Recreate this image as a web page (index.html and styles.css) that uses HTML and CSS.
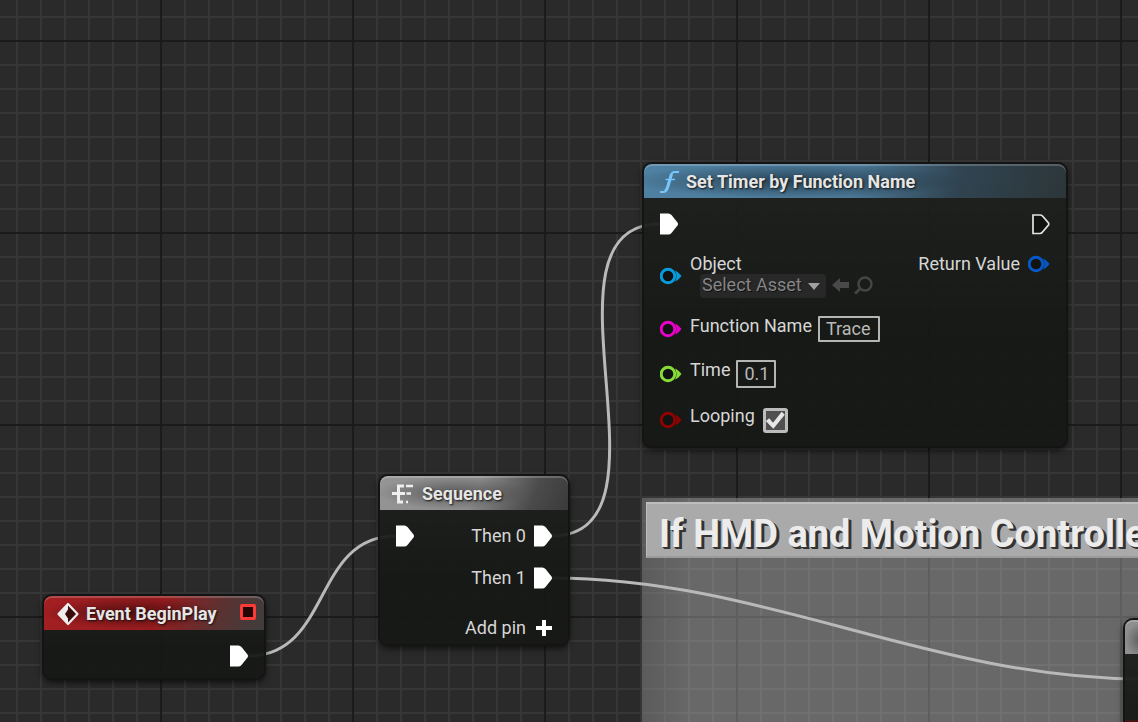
FILE: index.html
```html
<!DOCTYPE html>
<html lang="en">
<head>
<meta charset="utf-8">
<title>Event Graph</title>
<link rel="stylesheet" href="styles.css">
</head>
<body>
<svg class="defs" aria-hidden="true">
  <symbol id="exec" viewBox="0 0 18 22"><path d="M0 .5H8.500Q10 .5 11.500 2L17.500 9.500Q18.500 11 17.500 12.500L11.500 20Q10 21.500 8.500 21.500H0Z" fill="#fff"/></symbol>
  <symbol id="exec-open" viewBox="0 0 18 22"><path d="M1 2H8Q9.500 2 10.500 3L16.500 10Q17 11 16.500 12L10.500 19Q9.500 20.500 8 20.500H1Z" fill="#101210" stroke="#e4e4e4" stroke-width="1.700"/></symbol>
  <symbol id="pin" viewBox="0 0 22 18"><circle cx="8" cy="9" r="6.800" fill="#101312" stroke="currentColor" stroke-width="3"/><path d="M15 3.500Q18 4.500 21.500 9Q18 13.500 15 14.500Q18 9 15 3.500Z" fill="currentColor"/></symbol>
</svg>
<main class="graph">
  <section class="comment">
    <h1 class="comment-title">If HMD and Motion Controlle</h1>
  </section>

  <svg class="wires" aria-hidden="true">
    <path d="M248 656C332 656 312 536 396 536"/>
    <path d="M552 536C685 536 527 224 660 224"/>
    <path d="M552 578C763 578 931 679 1142 679"/>
  </svg>

  <article class="node event">
    <header class="node-head">
      <svg class="head-icon" viewBox="0 0 24 24"><path d="M12 2L21.500 12L12 22L2.500 12Z" fill="#3c0c0d" stroke="#eee" stroke-width="2.200" stroke-linejoin="round"/><path d="M12 2V7.500L9 12L12 16.500V22L2 12Z" fill="#eee"/></svg>
      <h2 class="node-title">Event BeginPlay</h2>
      <button class="delegate" aria-label="Output delegate"></button>
    </header>
    <div class="node-body">
      <div class="pins outputs">
        <div class="row exec-row"><svg class="exec"><use href="#exec"/></svg></div>
      </div>
    </div>
  </article>

  <article class="node sequence">
    <header class="node-head">
      <svg class="head-icon" viewBox="0 0 24 24" fill="none" stroke="#eee"><path d="M0 11.500H13" stroke-width="3"/><path d="M12 4H6.500V20H11" stroke-width="3"/><path d="M14 4H21M14.500 11.500H19M14 20H16" stroke-width="2.600"/></svg>
      <h2 class="node-title">Sequence</h2>
    </header>
    <div class="node-body">
      <div class="pins inputs">
        <div class="row exec-row"><svg class="exec"><use href="#exec"/></svg></div>
      </div>
      <div class="pins outputs">
        <div class="row exec-row"><span class="label">Then 0</span><svg class="exec"><use href="#exec"/></svg></div>
        <div class="row exec-row"><span class="label">Then 1</span><svg class="exec"><use href="#exec"/></svg></div>
        <button class="add-pin">Add pin<svg class="plus" viewBox="0 0 18 18"><path d="M10 1V17M2 9H18" stroke="#fff" stroke-width="4"/></svg></button>
      </div>
    </div>
  </article>

  <article class="node timer">
    <header class="node-head">
      <svg class="head-icon" viewBox="0 0 24 24" fill="none" stroke="#77c6fb"><path d="M4 22H7.500Q10 22 11 19L15 5Q16 2 18.500 2H23" stroke-width="2"/><path d="M9 21Q11 20 12 16L15.500 4" stroke-width="3"/><path d="M9.500 9.500H19" stroke-width="1.500"/></svg>
      <h2 class="node-title">Set Timer by Function Name</h2>
    </header>
    <div class="node-body">
      <div class="pins inputs">
        <div class="row exec-row"><svg class="exec"><use href="#exec"/></svg></div>
        <div class="row object-row">
          <svg class="pin cyan"><use href="#pin"/></svg>
          <div class="object">
            <label class="label" for="asset">Object</label>
            <div class="asset">
              <span class="picker">
                <select id="asset"><option>Select Asset</option></select>
                <svg class="caret" viewBox="0 0 12 8"><path d="M0 1H12L6 8Z" fill="#a0a0a0"/></svg>
              </span>
              <button class="tool" aria-label="Use selected asset"><svg viewBox="0 0 20 20"><path d="M1 9L9 2V6H18V12H9V16Z" fill="#484948"/></svg></button>
              <button class="tool" aria-label="Browse to asset"><svg viewBox="0 0 20 20" fill="none" stroke="#444544"><circle cx="12" cy="8" r="6.500" stroke-width="2.400"/><path d="M7.500 12.500L2 17.500" stroke-width="3"/></svg></button>
            </div>
          </div>
        </div>
        <div class="row">
          <svg class="pin magenta"><use href="#pin"/></svg>
          <label class="label" for="fn">Function Name</label>
          <input class="field name-field" id="fn" type="text" value="Trace">
        </div>
        <div class="row">
          <svg class="pin green"><use href="#pin"/></svg>
          <label class="label" for="time">Time</label>
          <input class="field time-field" id="time" type="text" value="0.1">
        </div>
        <div class="row check-row">
          <svg class="pin red"><use href="#pin"/></svg>
          <label class="label" for="loop">Looping</label>
          <input class="check" id="loop" type="checkbox" checked>
        </div>
      </div>
      <div class="pins outputs">
        <div class="row exec-row"><svg class="exec"><use href="#exec-open"/></svg></div>
        <div class="row"><span class="label">Return Value</span><svg class="pin blue"><use href="#pin"/></svg></div>
      </div>
    </div>
  </article>

  <article class="node partial">
    <header class="node-head"></header>
    <div class="node-body"></div>
  </article>
</main>
</body>
</html>
```
FILE: styles.css
```css
* { box-sizing: border-box; }

body {
  margin: 0;
  font: 18px/20px Roboto, "Liberation Sans", sans-serif;
  color: #d6d6d6;
}

h1, h2 { margin: 0; }

button {
  padding: 0;
  border: 0;
  background: none;
  color: inherit;
  font: inherit;
}

.defs { display: none; }

.graph {
  position: relative;
  min-height: 100vh;
  overflow: hidden;
  background-color: #2a2a2a;
  background-image:
    linear-gradient(90deg, #1b1b1b 2px, transparent 2px),
    linear-gradient(#1b1b1b 2px, transparent 2px),
    linear-gradient(90deg, #363636 2px, transparent 2px),
    linear-gradient(#363636 2px, transparent 2px);
  background-size: 192px 192px, 192px 192px, 24px 24px, 24px 24px;
  background-position: 160px 40px, 160px 40px, 16px 16px, 16px 16px;
}

.wires {
  position: absolute;
  inset: 0;
  width: 100%;
  height: 100%;
  fill: none;
  stroke: #b9b9b9;
  stroke-width: 3;
}

/* Comment region */
.comment {
  position: absolute;
  inset: 498px 0 0 642px;
  padding: 4px 0 0 4px;
  background:
    linear-gradient(90deg, rgba(60, 60, 60, .3), transparent 48px),
    rgba(222, 222, 222, .35);
}

.comment-title {
  padding: 8px 0 0 12px;
  border-top: 2px solid #bdbdbd;
  border-left: 1px solid #bdbdbd;
  border-bottom: 2px solid #9b9b9b;
  background: #aaa;
  color: #ececec;
  font-size: 38px;
  line-height: 44px;
  font-weight: 700;
  white-space: nowrap;
  text-shadow: 1px 1px #333, 2px 2px #333, 3px 2px #333;
}

/* Nodes */
.node {
  position: absolute;
  border-radius: 8px;
  background: linear-gradient(rgba(31, 33, 31, .94), rgba(22, 24, 21, .94) 60%);
  box-shadow: 0 0 0 2px #141414, 0 3px 7px 1px rgba(0, 0, 0, .7);
}

.event { left: 44px; top: 596px; width: 220px; }
.sequence { left: 380px; top: 476px; width: 188px; }
.timer { left: 644px; top: 164px; width: 422px; }
.partial { left: 1125px; top: 620px; width: 240px; }

.node-head {
  display: flex;
  align-items: center;
  gap: 6px;
  height: 34px;
  padding: 2px 8px 0 12px;
  border-radius: 8px 8px 0 0;
  box-shadow: inset 0 2px rgba(255, 255, 255, .2);
}

.event .node-head {
  background:
    radial-gradient(ellipse 90px 16px at 40% 50%, rgba(30, 5, 5, .6), transparent),
    linear-gradient(115deg, #a31f22 0, #981c1f 52%, #5b3232 78%, #3d3e3d 100%);
}

.sequence .node-head {
  background:
    radial-gradient(ellipse 75px 16px at 38% 50%, rgba(40, 40, 40, .5), transparent),
    linear-gradient(115deg, #959595 0, #8b8b8b 50%, #4a4b4a 80%, #393a39 100%);
}

.timer .node-head {
  background:
    radial-gradient(ellipse 170px 17px at 36% 50%, rgba(20, 35, 45, .65), transparent),
    linear-gradient(105deg, #4f81a2 0, #4b7897 50%, #304451 74%, #2c3639 100%);
}

.partial .node-head {
  background: radial-gradient(circle at 18px 20px, #555, #8f8f8f 18px);
}

.head-icon { flex: none; width: 24px; height: 24px; }

.node-title {
  font-size: 18px;
  line-height: 24px;
  font-weight: 700;
  color: #e6e6e6;
  white-space: nowrap;
  text-shadow: 1px 1px 2px #111;
}

.delegate {
  width: 16px;
  height: 16px;
  margin: 0 0 4px auto;
  border: 3px solid #fb3b38;
  border-radius: 2px;
  background: #250606;
}

.node-body {
  display: flex;
  justify-content: space-between;
  padding: 14px 16px 12px;
}

.event .node-body { padding-bottom: 10px; justify-content: flex-end; }
.sequence .node-body { padding-bottom: 4px; }
.partial .node-body { height: 120px; background: linear-gradient(transparent 66px, #421414 66px); }

.pins { display: flex; flex-direction: column; gap: 18px; }
.outputs { align-items: flex-end; }

.row { display: flex; align-items: flex-start; gap: 8px; }
.exec-row { align-items: center; height: 24px; }
.exec { width: 18px; height: 22px; }
.pin { flex: none; align-self: center; width: 22px; height: 18px; }
.label { line-height: 20px; white-space: nowrap; }
.label + .field { margin-left: -2px; }

.cyan { color: #079bdc; }
.magenta { color: #e800c8; }
.green { color: #88dc36; }
.red { color: #8c0304; }
.blue { color: #0757c4; }

.object { display: flex; flex-direction: column; }

.asset {
  display: flex;
  align-items: center;
  gap: 2px;
  margin-left: 10px;
}

.picker { position: relative; display: flex; margin-right: 3px; }

.picker select {
  appearance: none;
  width: 126px;
  height: 24px;
  padding: 0 2px 2px;
  border: 0;
  border-radius: 4px;
  background: #272827;
  color: #858585;
  font: inherit;
  text-shadow: 1px 1px #111;
}

.caret {
  position: absolute;
  right: 6px;
  top: 8px;
  width: 12px;
  height: 8px;
  pointer-events: none;
}

.tool { width: 20px; height: 20px; }
.tool svg { display: block; }

.field {
  border: 2px solid #b4b5b4;
  border-radius: 1px;
  padding: 0 6px 2px;
  background: transparent;
  color: #b9b9b9;
  font: inherit;
}

.name-field { width: 62px; height: 26px; }
.time-field { width: 40px; height: 28px; }

.check-row { height: 28px; }

.check {
  appearance: none;
  width: 25px;
  height: 25px;
  margin: 2px 0 0;
  border: 3px solid #bcbcbc;
  border-radius: 3px;
  background: #505050;
}

.check:checked::before {
  content: "";
  display: block;
  height: 19px;
  background: #e6e6e6;
  clip-path: polygon(0 52%, 18% 38%, 38% 62%, 84% 4%, 100% 20%, 40% 94%);
}

.add-pin {
  display: flex;
  align-items: center;
  gap: 8px;
  height: 24px;
  margin-top: 8px;
}

.plus { width: 18px; height: 18px; }
```
